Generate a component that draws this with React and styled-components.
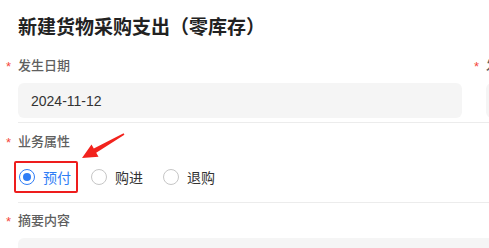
import React from "react";
import styled, { createGlobalStyle } from "styled-components";

const GlobalStyle = createGlobalStyle`
  html, body {
    margin: 0;
    padding: 0;
    background: #fff;
    overflow: hidden;
  }
  body {
    font-family: "Liberation Sans", "Noto Sans CJK SC", sans-serif;
  }
`;

const Page = styled.div`
  position: relative;
  width: 960px;
  height: 248px;
  overflow: hidden;
`;

const Title = styled.h1`
  margin: 0;
  padding: 16px 18px 0;
  font-size: 19px;
  line-height: 24px;
  font-weight: 700;
  color: #222;
`;

const Row = styled.div`
  margin-left: 18px;
  padding: ${(p) => p.$pad || "9px 0"};
  border-bottom: ${(p) => (p.$last ? "none" : "1px solid #ececec")};
  display: grid;
  grid-template-columns: ${(p) => (p.$split ? "444px 444px" : "1fr")};
  column-gap: 24px;
`;

const Field = styled.div`
  display: flex;
  flex-direction: column;
  gap: ${(p) => p.$gap || "7px"};
`;

const Label = styled.div`
  position: relative;
  font-size: 13px;
  line-height: 20px;
  font-weight: 500;
  color: #5f5f5f;

  &::before {
    content: "*";
    position: absolute;
    left: -12px;
    top: 1px;
    color: #f5483b;
    font-size: 13px;
  }
`;

const InputBox = styled.div`
  height: 35px;
  box-sizing: border-box;
  padding: 0 13px;
  background: #f5f5f5;
  border-radius: 6px;
  display: flex;
  align-items: center;
  font-size: 14px;
  color: #333;
`;

const RadioGroup = styled.div`
  display: flex;
  align-items: center;
  gap: 8px;
  margin-left: -4px;
`;

const Option = styled.label`
  height: 32px;
  box-sizing: border-box;
  padding: 0 5px 0 3px;
  border: 2px solid ${(p) => (p.$highlight ? "#ee1d1d" : "transparent")};
  border-radius: 2px;
  display: flex;
  align-items: center;
  gap: 8px;
  font-size: 14px;
  color: ${(p) => (p.$checked ? "#2f7df6" : "#333")};
`;

const Circle = styled.span`
  width: 16px;
  height: 16px;
  box-sizing: border-box;
  border-radius: 50%;
  border: 1px solid ${(p) => (p.$checked ? "#2f7df6" : "#c6c6c6")};
  display: flex;
  align-items: center;
  justify-content: center;

  &::after {
    content: "";
    width: 8px;
    height: 8px;
    border-radius: 50%;
    background: ${(p) => (p.$checked ? "#2f7df6" : "transparent")};
  }
`;

const Arrow = styled.svg`
  position: absolute;
  left: 0;
  top: 0;
  pointer-events: none;
`;

const options = [
  { text: "预付", checked: true },
  { text: "购进" },
  { text: "退购" },
];

export default function App() {
  return (
    <Page>
      <GlobalStyle />
      <Title>新建货物采购支出（零库存）</Title>
      <Row $split $pad="16px 0 4px">
        <Field>
          <Label>发生日期</Label>
          <InputBox>2024-11-12</InputBox>
        </Field>
        <Field>
          <Label>发生科目</Label>
          <InputBox />
        </Field>
      </Row>
      <Row>
        <Field $gap="9px">
          <Label>业务属性</Label>
          <RadioGroup>
            {options.map((o, i) => (
              <Option key={o.text} $checked={o.checked} $highlight={i === 0}>
                <Circle $checked={o.checked} />
                {o.text}
              </Option>
            ))}
          </RadioGroup>
        </Field>
      </Row>
      <Row $pad="8px 0 0" $last>
        <Field>
          <Label>摘要内容</Label>
          <InputBox style={{ height: 60 }} />
        </Field>
      </Row>
      <Arrow width="489" height="248" viewBox="0 0 489 248">
        <polygon
          points="82,158 91.5,144.5 93.8,148.4 123.6,133.3 124.4,134.7 96.2,152.8 98.5,156.7"
          fill="#f2231d"
        />
      </Arrow>
    </Page>
  );
}
